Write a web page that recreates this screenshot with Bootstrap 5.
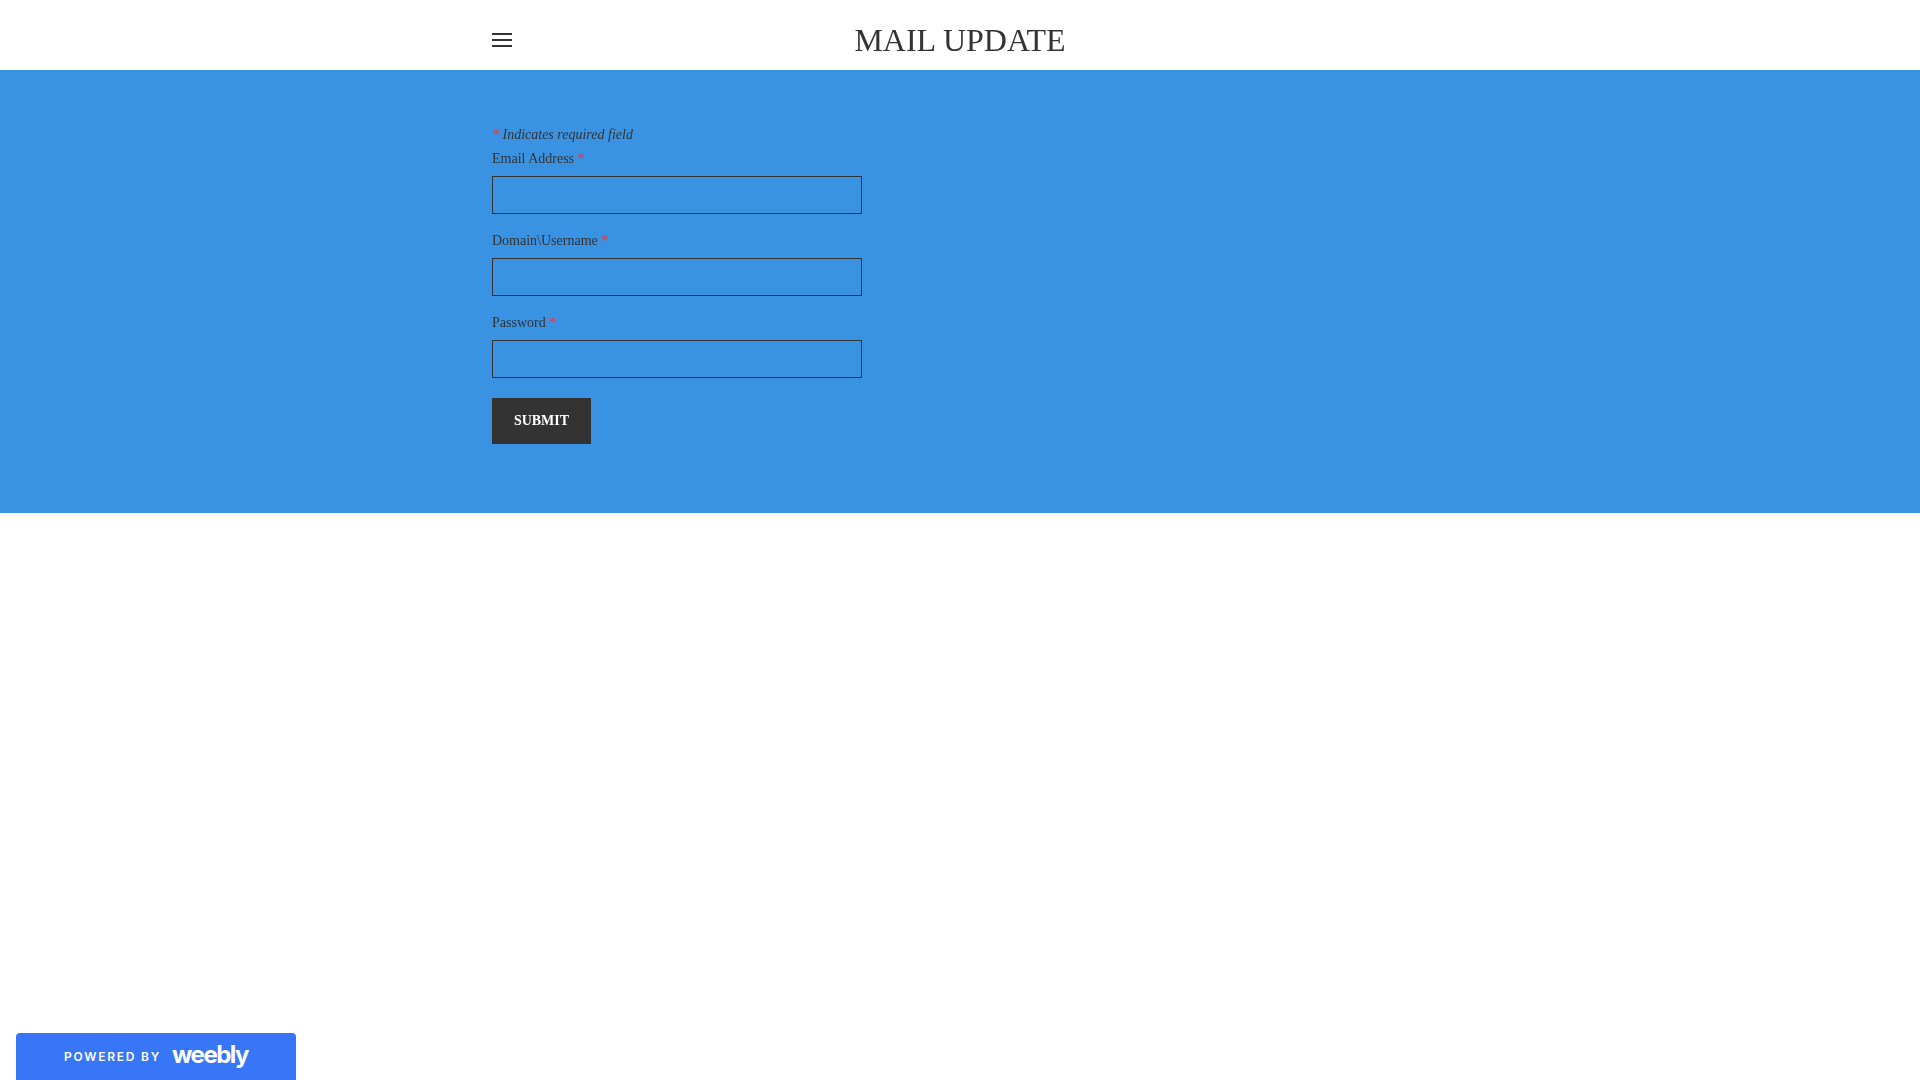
<!DOCTYPE html>
<html lang="en">
<head>
<meta charset="utf-8">
<title>MAIL UPDATE</title>
<link href="https://cdn.jsdelivr.net/npm/bootstrap@5.3.0/dist/css/bootstrap.min.css" rel="stylesheet">
<style>
html,body{height:100%}
body{font-family:"Liberation Serif",serif;font-size:14px;color:#333;background:#fff}
.page-wrap{width:936px;will-change:opacity}
.site-head{height:70px}
.head-inner{height:80px;margin-bottom:-10px}
.burger{width:20px;height:14px;border-top:2px solid #333;border-bottom:2px solid #333}
.burger::after{content:"";display:block;height:2px;background:#333;margin-top:4px}
.head-title{font-size:32px;line-height:1;color:#333}
.band{background:#3a93e2;height:443px;padding-top:55px}
.req-note{font-style:italic;line-height:20px;margin-bottom:4px}
.req{color:#d63a4a}
.fld-label{display:block;line-height:20px;margin-bottom:7px}
.fld-input.form-control{width:370px;height:38px;background:transparent;border:1px solid #333;border-radius:0;margin-bottom:17px;box-shadow:none}
.send-btn.btn{width:99px;height:46px;margin-top:3px;background:#333;border:0;border-radius:0;color:#fff;font-weight:700;font-size:14px;padding:0;line-height:44px}
.wb-bar{left:16px;width:280px;height:47px;background:#3676f7;border-radius:4px 4px 0 0;color:#fff;padding-left:48px;gap:11px;will-change:opacity}
.wb-text{font-family:Inter,sans-serif;font-size:12px;font-weight:600;letter-spacing:1.75px}
.wb-logo{font-family:Inter,sans-serif;font-weight:700;font-size:24px;letter-spacing:-1.5px;line-height:1;margin-top:-3px}
</style>
</head>
<body>
<header class="site-head">
  <div class="page-wrap mx-auto position-relative d-flex align-items-center justify-content-center head-inner">
    <div class="burger position-absolute start-0"></div>
    <div class="head-title">MAIL UPDATE</div>
  </div>
</header>
<main class="band">
  <div class="page-wrap mx-auto">
    <form>
      <div class="req-note"><span class="req">*</span> Indicates required field</div>
      <label class="fld-label">Email Address <span class="req">*</span></label>
      <input class="form-control fld-input" type="text">
      <label class="fld-label">Domain\Username <span class="req">*</span></label>
      <input class="form-control fld-input" type="text">
      <label class="fld-label">Password <span class="req">*</span></label>
      <input class="form-control fld-input" type="password">
      <button class="btn send-btn" type="button">SUBMIT</button>
    </form>
  </div>
</main>
<div class="wb-bar position-fixed bottom-0 d-flex align-items-center">
  <span class="wb-text">POWERED BY</span>
  <span class="wb-logo">weebly</span>
</div>
<script src="https://cdn.jsdelivr.net/npm/bootstrap@5.3.0/dist/js/bootstrap.bundle.min.js"></script>
</body>
</html>
